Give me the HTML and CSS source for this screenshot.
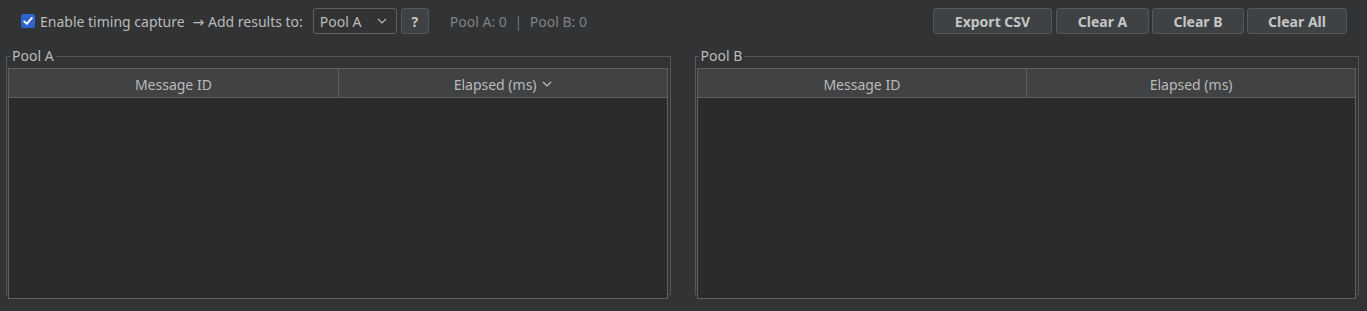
FILE: index.html
```html
<!DOCTYPE html>
<html>
<head>
<meta charset="utf-8">
<link rel="stylesheet" href="styles.css">
</head>
<body>
<div class="toolbar">
  <div class="left">
    <label class="check">
      <span class="box"><svg width="14" height="14" viewBox="0 0 14 14"><path d="M3.2 7.3 L5.8 9.9 L10.9 3.9" fill="none" stroke="#ffffff" stroke-width="1.9" stroke-linecap="round" stroke-linejoin="round"/></svg></span>
      <span class="lbl">Enable timing capture</span>
    </label>
    <span class="lbl arrow"><span class="arr">→</span> Add results to:</span>
    <div class="combo"><span>Pool A</span><svg width="10" height="6" viewBox="0 0 10 6"><path d="M1 1 L5 5 L9 1" fill="none" stroke="#bbbbbb" stroke-width="1.1"/></svg></div>
    <div class="btn help">?</div>
    <span class="status">Pool A: 0 <span class="sep">|</span> Pool B: 0</span>
  </div>
  <div class="right">
    <div class="btn b-export">Export CSV</div>
    <div class="btn b-a">Clear A</div>
    <div class="btn b-b">Clear B</div>
    <div class="btn b-all">Clear All</div>
  </div>
</div>
<div class="pools">
  <fieldset class="pool">
    <legend>Pool A</legend>
    <div class="table">
      <div class="head">
        <div class="col">Message ID</div>
        <div class="col">Elapsed (ms)<svg class="sort" width="10" height="6" viewBox="0 0 10 6"><path d="M1 1 L5 5 L9 1" fill="none" stroke="#c4c4c4" stroke-width="1.2"/></svg></div>
      </div>
      <div class="body"></div>
    </div>
  </fieldset>
  <fieldset class="pool">
    <legend>Pool B</legend>
    <div class="table">
      <div class="head">
        <div class="col">Message ID</div>
        <div class="col">Elapsed (ms)</div>
      </div>
      <div class="body"></div>
    </div>
  </fieldset>
</div>
</body>
</html>
```
FILE: styles.css
```css
html, body {
  margin: 0;
  padding: 0;
  background: #313335;
  height: 311px;
  overflow: hidden;
}
body {
  font-family: "Noto Sans", "Open Sans", sans-serif;
  font-size: 14px;
  color: #bbbbbb;
}
.toolbar {
  display: flex;
  justify-content: space-between;
  align-items: center;
  padding: 8px 20px 0 21px;
  height: 26px;
}
.left, .right {
  display: flex;
  align-items: center;
  height: 26px;
}
.check {
  display: flex;
  align-items: center;
}
.box {
  width: 14px;
  height: 14px;
  border-radius: 2px;
  background: #2f65ca;
  display: block;
}
.box svg { display: block; }
.lbl {
  margin-left: 5px;
  white-space: nowrap;
  padding-top: 1px;
}
.arrow { margin-left: 8px; }
.arr {
  font-family: "DejaVu Sans", sans-serif;
  font-size: 14px;
}
.combo {
  margin-left: 10px;
  box-sizing: border-box;
  width: 84px;
  height: 26px;
  border: 1px solid #5e6163;
  border-radius: 3px;
  display: flex;
  align-items: center;
  justify-content: space-between;
  padding: 1px 9px 0 6px;
  background: #313335;
}
.combo svg { margin-top: -2px; }
.btn {
  box-sizing: border-box;
  height: 26px;
  border: 1px solid #55585a;
  border-radius: 3px;
  background: #3f4244;
  color: #c5c5c5;
  font-weight: bold;
  display: flex;
  align-items: center;
  justify-content: center;
  padding-top: 1px;
}
.help {
  margin-left: 4px;
  width: 28px;
}
.status {
  margin-left: 21px;
  color: #7f8184;
  white-space: nowrap;
  padding-top: 1px;
}
.sep {
  margin: 0 4px;
  color: #6f7a86;
}
.b-export { width: 119px; }
.b-a { width: 93px; margin-left: 4px; }
.b-b { width: 92px; margin-left: 3px; }
.b-all { width: 100px; margin-left: 3px; }

.pools {
  display: grid;
  grid-template-columns: 1fr 1fr;
  gap: 24px;
  padding: 0 8px 0 6px;
  margin-top: 15px;
}
.pool {
  margin: 0;
  border: 1px solid #55585a;
  padding: 5px 2px 2px 1px;
  height: 246px;
  box-sizing: border-box;
  min-width: 0;
}
.pool legend {
  padding: 0 2px;
  margin-left: 2px;
  line-height: 14px;
  color: #bbbbbb;
}
.table {
  border: 1px solid #5e6062;
  height: 231px;
  display: flex;
  flex-direction: column;
  box-sizing: border-box;
}
.head {
  display: grid;
  grid-template-columns: 1fr 1fr;
  height: 28px;
  background: #404244;
  border-bottom: 1px solid #5e6062;
}
.col {
  display: flex;
  align-items: center;
  justify-content: center;
  color: #bbbbbb;
  padding-top: 2px;
}
.col + .col { border-left: 1px solid #5a5c5e; }
.sort { margin-left: 5px; margin-top: 0; }
.body {
  flex: 1;
  background: #2b2b2b;
}
```
